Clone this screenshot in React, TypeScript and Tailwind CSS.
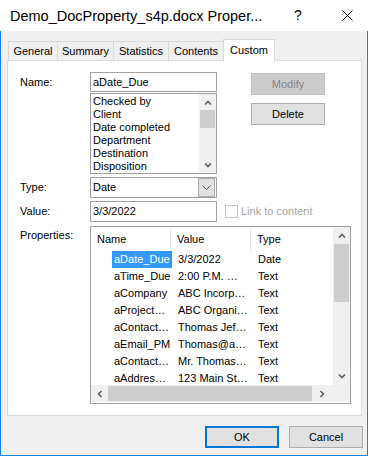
const font = { fontFamily: '"Liberation Sans", Arial, sans-serif' };

const ArrowUp = () => (
  <svg width="8" height="5" viewBox="0 0 8 5">
    <path d="M1 4.5 L4 1.5 L7 4.5" fill="none" stroke="#606060" strokeWidth="1.6" />
  </svg>
);
const ArrowDown = () => (
  <svg width="8" height="5" viewBox="0 0 8 5">
    <path d="M1 0.5 L4 3.5 L7 0.5" fill="none" stroke="#606060" strokeWidth="1.6" />
  </svg>
);
const ArrowLeft = () => (
  <svg width="5" height="8" viewBox="0 0 5 8">
    <path d="M4.5 1 L1.5 4 L4.5 7" fill="none" stroke="#606060" strokeWidth="1.6" />
  </svg>
);
const ArrowRight = () => (
  <svg width="5" height="8" viewBox="0 0 5 8">
    <path d="M0.5 1 L3.5 4 L0.5 7" fill="none" stroke="#606060" strokeWidth="1.6" />
  </svg>
);

const tabs = ["General", "Summary", "Statistics", "Contents", "Custom"];
const tabWidths = ["w-[50px]", "w-[57px]", "w-[56px]", "w-[56px]", "w-[52px]"];

const names = ["Checked by", "Client", "Date completed", "Department", "Destination", "Disposition"];

const rows = [
  ["aDate_Due", "3/3/2022", "Date"],
  ["aTime_Due", "2:00 P.M.  …", "Text"],
  ["aCompany", "ABC Incorp…", "Text"],
  ["aProject…", "ABC Organi…", "Text"],
  ["aContact…", "Thomas Jef…", "Text"],
  ["aEmail_PM", "Thomas@a…", "Text"],
  ["aContact…", "Mr. Thomas…", "Text"],
  ["aAddres…", "123 Main St…", "Text"],
];

export default function App() {
  return (
    <div className="w-[368px] h-[456px] flex flex-col bg-[#f0f0f0] text-black text-[11px] leading-[13px]" style={font}>
      {/* title bar */}
      <div className="h-[31px] bg-white flex items-center shrink-0">
        <div className="pl-[10px] text-[14.5px] leading-[18px] flex-1 whitespace-nowrap">Demo_DocProperty_s4p.docx Proper...</div>
        <div className="text-[14px] w-[10px] mr-[38px]">?</div>
        <svg width="11" height="11" viewBox="0 0 11 11" className="mr-[15px]">
          <path d="M0.5 0.5 L10.5 10.5 M10.5 0.5 L0.5 10.5" stroke="#000" strokeWidth="1" />
        </svg>
      </div>

      <div className="flex-1 flex flex-col border-x border-b border-[#1883d7] pt-[8px] pl-[6px] pr-[5px]">
        {/* tabs */}
        <div className="flex h-[21px] pl-[1px]">
          {tabs.map((t, i) =>
            t === "Custom" ? (
              <div key={t} className={`${tabWidths[i]} -ml-px relative z-10 h-[22px] self-start bg-white border-x border-t border-[#d9d9d9] flex items-center justify-center`}>
                {t}
              </div>
            ) : (
              <div key={t} className={`${tabWidths[i]} ${i > 0 ? "-ml-px" : ""} h-[19px] self-end bg-[#f0f0f0] border-x border-t border-[#d9d9d9] flex items-center justify-center`}>
                {t}
              </div>
            )
          )}
        </div>

        {/* panel */}
        <div className="h-[356px] bg-white border border-[#d9d9d9] pt-[11px] pl-[12px] flex flex-col">
          {/* Name row */}
          <div className="flex">
            <div className="w-[70px] h-[20px] flex items-center">Name:</div>
            <div className="w-[127px] flex flex-col">
              <div className="h-[20px] border border-[#a0a0a0] flex items-center pl-[2px]">aDate_Due</div>
              <div className="mt-[1px] h-[81px] border border-[#a0a0a0] flex">
                <div className="flex-1 pl-[2px] pt-[1px] overflow-hidden">
                  {names.map((n) => (
                    <div key={n} className="h-[13px] whitespace-nowrap">{n}</div>
                  ))}
                </div>
                <div className="w-[17px] bg-[#f0f0f0] flex flex-col">
                  <div className="h-[16px] flex items-center justify-center"><ArrowUp /></div>
                  <div className="h-[18px] mx-[1px] bg-[#cdcdcd]" />
                  <div className="flex-1" />
                  <div className="h-[16px] flex items-center justify-center"><ArrowDown /></div>
                </div>
              </div>
            </div>
            <div className="ml-[34px] flex flex-col">
              <div className="mt-[1px] w-[74px] h-[22px] bg-[#cccccc] border border-[#bfbfbf] text-[#838383] flex items-center justify-center">Modify</div>
              <div className="mt-[8px] w-[74px] h-[22px] bg-[#e1e1e1] border border-[#adadad] flex items-center justify-center">Delete</div>
            </div>
          </div>

          {/* Type row */}
          <div className="flex mt-[3px]">
            <div className="w-[70px] h-[21px] flex items-center">Type:</div>
            <div className="w-[127px] h-[21px] border border-[#a0a0a0] flex">
              <div className="flex-1 flex items-center pl-[2px]">Date</div>
              <div className="w-[17px] border border-[#adadad] bg-[#e1e1e1] flex items-center justify-center mr-[1px]">
                <svg width="9" height="5" viewBox="0 0 9 5">
                  <path d="M0.5 0.5 L4.5 4.5 L8.5 0.5" fill="none" stroke="#555" strokeWidth="1" />
                </svg>
              </div>
            </div>
          </div>

          {/* Value row */}
          <div className="flex mt-[3px] items-center">
            <div className="w-[70px] h-[21px] flex items-center">Value:</div>
            <div className="w-[127px] h-[21px] border border-[#a0a0a0] flex items-center pl-[2px]">3/3/2022</div>
            <div className="ml-[8px] w-[13px] h-[13px] border border-[#c4c4c4] bg-white" />
            <div className="ml-[3px] text-[#a3a3a3]">Link to content</div>
          </div>

          {/* Properties row */}
          <div className="flex mt-[4px]">
            <div className="w-[70px] pt-[3px]">Properties:</div>
            <div className="w-[261px] h-[178px] border border-[#a0a0a0] flex flex-col">
              <div className="h-[158px] flex">
                <div className="flex-1 overflow-hidden">
                  <div className="h-[24px] flex items-center">
                    <div className="w-[80px] h-full pl-[6px] flex items-center border-r border-[#e5e5e5]">Name</div>
                    <div className="w-[80px] h-full pl-[6px] flex items-center border-r border-[#e5e5e5]">Value</div>
                    <div className="flex-1 h-full pl-[6px] flex items-center">Type</div>
                  </div>
                  {rows.map((r, i) => (
                    <div key={i} className="h-[17px] flex items-center whitespace-nowrap">
                      <div className="w-[80px] pl-[21px] flex">
                        <span className={i === 0 ? "bg-[#3399ff] text-white px-[2px] leading-[17px]" : "px-[2px]"}>{r[0]}</span>
                      </div>
                      <div className="w-[80px] pl-[7px]">{r[1]}</div>
                      <div className="flex-1 pl-[7px]">{r[2]}</div>
                    </div>
                  ))}
                </div>
                <div className="w-[17px] bg-[#f0f0f0] flex flex-col">
                  <div className="h-[17px] flex items-center justify-center"><ArrowUp /></div>
                  <div className="h-[58px] mx-[1px] bg-[#cdcdcd]" />
                  <div className="flex-1" />
                  <div className="h-[17px] flex items-center justify-center"><ArrowDown /></div>
                </div>
              </div>
              <div className="h-[17px] flex">
                <div className="flex-1 bg-[#f0f0f0] flex">
                  <div className="w-[17px] flex items-center justify-center"><ArrowLeft /></div>
                  <div className="w-[204px] my-[1px] bg-[#cdcdcd]" />
                  <div className="flex-1 flex items-center justify-center"><ArrowRight /></div>
                </div>
                <div className="w-[17px] bg-[#f0f0f0]" />
              </div>
            </div>
          </div>
        </div>

        {/* footer buttons */}
        <div className="flex justify-end gap-[10px] mt-[10px] -mr-[1px]">
          <div className="w-[74px] h-[22px] bg-[#e1e1e1] border-2 border-[#0078d7] flex items-center justify-center">OK</div>
          <div className="w-[74px] h-[22px] bg-[#e1e1e1] border border-[#adadad] flex items-center justify-center">Cancel</div>
        </div>
      </div>
    </div>
  );
}
